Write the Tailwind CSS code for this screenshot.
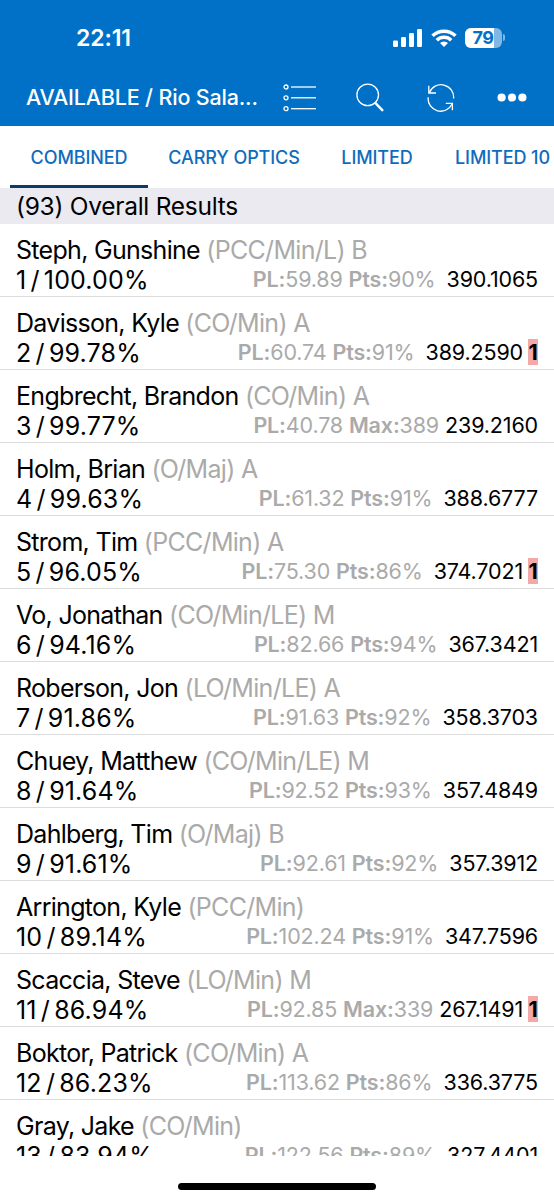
<!DOCTYPE html>
<html lang="en">
    <head>
        <meta charset="UTF-8">
        <meta name="viewport" content="width=device-width, initial-scale=1.0">
        <title>Overall Results</title>
        <script src="https://cdn.jsdelivr.net/npm/@tailwindcss/browser@4"></script>
    </head>
    <body class="bg-white text-black font-['Inter',sans-serif]">

        <main class="relative flex flex-col w-[554px] h-[1200px] overflow-hidden">

            <header class="h-[126px] shrink-0 bg-[#0171c7] text-white">
                <!-- status bar -->
                <div class="flex items-center h-[75px] pl-[76px] pr-[49px]">
                    <span class="mt-px text-[23px] font-semibold tracking-[-0.1px] leading-none">22:11</span>
                    <svg class="ml-auto" width="29" height="18" viewBox="0 0 29 18" fill="#fff">
                        <rect x="0" y="11.5" width="5" height="6.5" rx="1.3"/>
                        <rect x="8" y="8" width="5" height="10" rx="1.3"/>
                        <rect x="16" y="4" width="5" height="14" rx="1.3"/>
                        <rect x="24" y="0" width="5" height="18" rx="1.3"/>
                    </svg>
                    <svg class="ml-[9px]" width="26" height="18" viewBox="0 0 26 18" fill="none" stroke="#fff" stroke-width="3.5">
                        <path d="M1.5 6.8a16.5 16.5 0 0 1 23 0"/>
                        <path d="M5.8 11.2a10.4 10.4 0 0 1 14.4 0"/>
                        <path d="M13 18l-4-4a5.8 5.8 0 0 1 8 0z" fill="#fff" stroke="none"/>
                    </svg>
                    <div class="relative ml-[8px] flex items-center w-[37px] h-[20px] rounded-[6px] overflow-hidden bg-[#80b8e3]">
                        <div class="absolute inset-y-0 left-0 w-[29px] bg-white"></div>
                        <span class="relative w-full text-center text-[18px] font-bold leading-none tracking-[-0.5px] text-[#0171c7]">79</span>
                    </div>
                    <div class="ml-[1.5px] w-[2px] h-[7px] rounded-r-full bg-[#80b8e3]"></div>
                </div>

                <!-- toolbar -->
                <div class="flex items-center h-[45px] pl-[26px]">
                    <h1 class="w-[257px] shrink-0 text-[21.5px] font-medium tracking-[-0.18px] whitespace-nowrap">AVAILABLE / Rio Sala...</h1>
                    <svg class="shrink-0" width="33" height="28" viewBox="0 0 33 28" fill="none" stroke="#fff" stroke-width="1.3">
                        <circle cx="3" cy="3" r="2"/><path d="M8 3h25"/>
                        <circle cx="3" cy="13.8" r="2"/><path d="M8 13.8h25"/>
                        <circle cx="3" cy="24.7" r="2"/><path d="M8 24.7h25"/>
                    </svg>
                    <svg class="shrink-0 ml-[40px]" width="28" height="29" viewBox="0 0 28 29" fill="none" stroke="#fff">
                        <circle cx="11.7" cy="11.9" r="10.8" stroke-width="1.3"/>
                        <path d="M18.8 19.4l8.2 8.4" stroke-width="2.4"/>
                    </svg>
                    <svg class="shrink-0 ml-[43px]" width="28" height="28" viewBox="0 0 28 28" fill="none" stroke="#fff" stroke-width="1.3">
                        <path d="M2.3 8.8A12.6 12.6 0 0 1 26.6 14.5"/>
                        <path d="M1.8 1.8V9H9"/>
                        <path d="M1.2 13.2A12.6 12.6 0 0 0 25.2 19.8"/>
                        <path d="M18.8 19.3h6.6v7"/>
                    </svg>
                    <svg class="shrink-0 ml-[42px]" width="30" height="10" viewBox="0 0 30 10" fill="#fff">
                        <circle cx="4.6" cy="4.5" r="4.1"/><circle cx="15" cy="4.5" r="4.1"/><circle cx="25.4" cy="4.5" r="4.1"/>
                    </svg>
                </div>
            </header>

            <nav class="flex h-[62px] shrink-0 pl-[10px] text-[18px] font-medium tracking-[-0.1px] text-[#0f6cbd] whitespace-nowrap">
                <a class="w-[138px] shrink-0 h-[62px] leading-[63px] text-center border-b-[3px] border-[#0c3b66]">COMBINED</a>
                <a class="w-[172px] shrink-0 leading-[63px] text-center">CARRY OPTICS</a>
                <a class="w-[114px] shrink-0 leading-[63px] text-center">LIMITED</a>
                <a class="w-[137px] shrink-0 leading-[63px] text-center">LIMITED 10</a>
            </nav>

            <h2 class="h-[36px] shrink-0 pl-[16px] bg-[#ebeaf0] text-[24.5px] leading-[37px] tracking-[-0.27px]">(93) Overall Results</h2>

            <ul id="results" class="h-[932px] shrink-0 overflow-hidden"></ul>

            <div class="mt-[27px] mx-auto w-[198px] h-[7px] shrink-0 rounded-full bg-black"></div>
        </main>

        <script>
        // name, division and class, place / percent, PL, label, value, score, penalty
        const results = [
            ["Steph, Gunshine", "(PCC/Min/L) B", "1 / 100.00%", "59.89", "Pts", "90%", "390.1065", ""],
            ["Davisson, Kyle", "(CO/Min) A", "2 / 99.78%", "60.74", "Pts", "91%", "389.2590", "1"],
            ["Engbrecht, Brandon", "(CO/Min) A", "3 / 99.77%", "40.78", "Max", "389", "239.2160", ""],
            ["Holm, Brian", "(O/Maj) A", "4 / 99.63%", "61.32", "Pts", "91%", "388.6777", ""],
            ["Strom, Tim", "(PCC/Min) A", "5 / 96.05%", "75.30", "Pts", "86%", "374.7021", "1"],
            ["Vo, Jonathan", "(CO/Min/LE) M", "6 / 94.16%", "82.66", "Pts", "94%", "367.3421", ""],
            ["Roberson, Jon", "(LO/Min/LE) A", "7 / 91.86%", "91.63", "Pts", "92%", "358.3703", ""],
            ["Chuey, Matthew", "(CO/Min/LE) M", "8 / 91.64%", "92.52", "Pts", "93%", "357.4849", ""],
            ["Dahlberg, Tim", "(O/Maj) B", "9 / 91.61%", "92.61", "Pts", "92%", "357.3912", ""],
            ["Arrington, Kyle", "(PCC/Min)", "10 / 89.14%", "102.24", "Pts", "91%", "347.7596", ""],
            ["Scaccia, Steve", "(LO/Min) M", "11 / 86.94%", "92.85", "Max", "339", "267.1491", "1"],
            ["Boktor, Patrick", "(CO/Min) A", "12 / 86.23%", "113.62", "Pts", "86%", "336.3775", ""],
            ["Gray, Jake", "(CO/Min)", "13 / 83.94%", "122.56", "Pts", "89%", "327.4401", ""],
        ];

        document.getElementById("results").innerHTML = results.map(([name, division, place, pl, label, value, score, penalty]) => `
            <li class="h-[73px] px-[16px] pt-[11px] border-b border-[#dcdcdc] whitespace-nowrap">
                <div class="text-[25px] leading-[31px] tracking-[-0.7px]">${name} <span class="text-[#aaaaaa] tracking-[-0.7px]">${division}</span></div>
                <div class="flex justify-between">
                    <span class="text-[25px] leading-[29px] tracking-[0.15px] [word-spacing:-3px]">${place}</span>
                    <span class="flex text-[21.5px] leading-[26px] tracking-[-0.15px]">
                        <span class="text-[#aaaaaa]"><b class="font-semibold">PL:</b>${pl} <b class="font-semibold">${label}:</b>${value}</span>
                        <span class="${label === "Max" ? "ml-[6px]" : "ml-[11px]"}">${score}</span>
                        ${penalty ? `<b class="ml-[5px] w-[10px] h-[26px] leading-[26px] text-center bg-[#f4a9a9]">${penalty}</b>` : ""}
                    </span>
                </div>
            </li>`).join("");
        </script>
    </body>
</html>
